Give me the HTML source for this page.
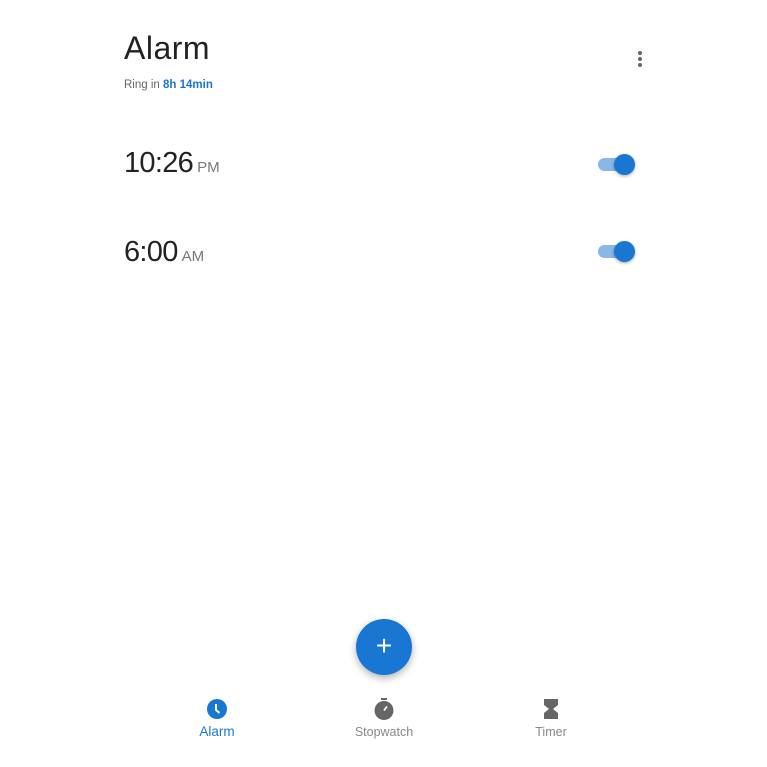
<!DOCTYPE html>
<html><head><style>
body{margin:0;width:767px;height:767px;background:#fff;font-family:"Liberation Sans",sans-serif;position:relative;overflow:hidden}
.a{position:absolute}
.title{left:124px;top:30px;font-size:32px;color:#222;letter-spacing:0.5px}
.sub{left:124px;top:79px;font-size:11.5px;color:#666}
.sub b{color:#1976d2}
.time{left:124px;font-size:29px;color:#222;letter-spacing:-0.7px}
.time span{font-size:15px;color:#777;margin-left:4px;letter-spacing:0}
.track{width:36px;height:13px;border-radius:7px;background:#8ab6e8}
.thumb{width:21px;height:21px;border-radius:50%;background:#1976d2;box-shadow:0 1px 3px rgba(0,0,0,.35)}
.dot{width:4px;height:4px;border-radius:50%;background:#666;left:638px}
.fab{left:356px;top:619px;width:56px;height:56px;border-radius:50%;background:#1976d2;box-shadow:0 3px 8px rgba(0,0,0,.3);color:#fff;font-size:28px;text-align:center;line-height:54px}
.lbl{font-size:12.5px;color:#888;top:725px;width:120px;text-align:center}
</style></head><body>
<div class="a title">Alarm</div>
<div class="a sub">Ring in <b>8h 14min</b></div>
<div class="a dot" style="top:51px"></div>
<div class="a dot" style="top:57px"></div>
<div class="a dot" style="top:63px"></div>
<div class="a time" style="top:147px">10:26<span>PM</span></div>
<div class="a time" style="top:236px">6:00<span>AM</span></div>
<div class="a track" style="left:598px;top:158px"></div>
<div class="a thumb" style="left:614px;top:154px"></div>
<div class="a track" style="left:598px;top:245px"></div>
<div class="a thumb" style="left:614px;top:241px"></div>
<div class="a fab">+</div>
<svg class="a" style="left:206px;top:698px" width="22" height="22" viewBox="0 0 22 22"><circle cx="11" cy="11" r="10" fill="#1976d2"/><path d="M10 6v6l3.5 3" stroke="#fff" stroke-width="2" fill="none"/></svg>
<svg class="a" style="left:373px;top:697px" width="22" height="24" viewBox="0 0 22 24"><rect x="8" y="1" width="6" height="2" fill="#666"/><circle cx="11" cy="13.5" r="9.5" fill="#666"/><path d="M11 13.5l3-4" stroke="#fff" stroke-width="1.8"/></svg>
<svg class="a" style="left:542px;top:698px" width="18" height="22" viewBox="0 0 18 22"><path d="M2 1h14v6l-5 4 5 4v6H2v-6l5-4-5-4z" fill="#666"/></svg>
<div class="a lbl" style="left:157px;color:#1976d2;font-size:13.5px;top:724px">Alarm</div>
<div class="a lbl" style="left:324px">Stopwatch</div>
<div class="a lbl" style="left:491px">Timer</div>
</body></html>
